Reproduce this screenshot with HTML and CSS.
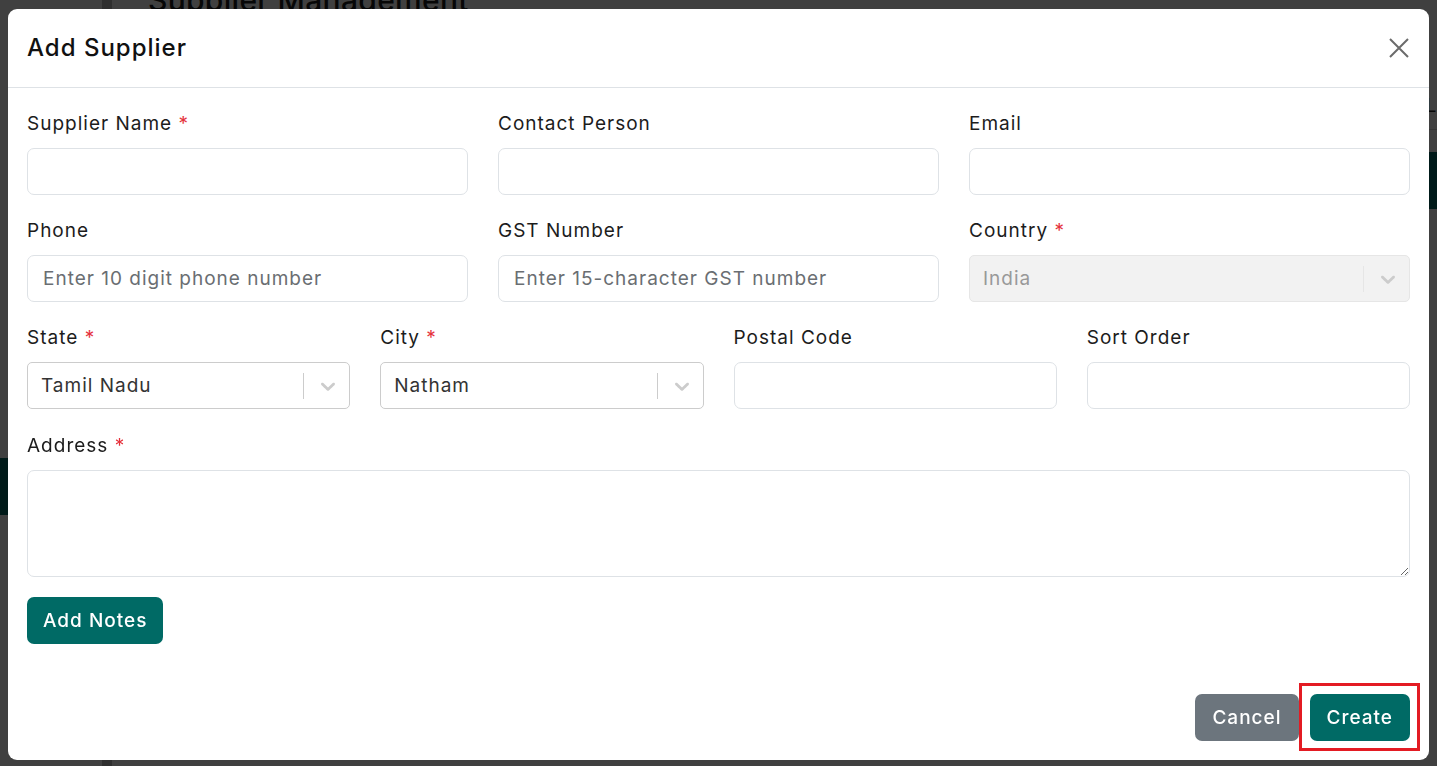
FILE: index.html
```html
<!DOCTYPE html>
<html lang="en">
<head>
    <meta charset="UTF-8">
    <meta name="viewport" content="width=device-width, initial-scale=1.0">
    <title>Supplier Management</title>
    <link rel="stylesheet" href="styles.css">
</head>
<body>
    <div class="app">
        <aside class="sidebar">
            <div class="side-item active"></div>
        </aside>
        <main class="main">
            <h1 class="page-title">Supplier Management</h1>
            <div class="toolbar"><span class="toolbar-link">List</span></div>
            <div class="table-head"></div>
        </main>
    </div>

    <div class="backdrop">
        <div class="modal">
            <div class="modal-header">
                <h2 class="modal-title">Add Supplier</h2>
                <button class="btn-close" type="button" aria-label="Close">
                    <svg width="22" height="22" viewBox="0 0 22 22">
                        <path d="M2 2L20 20M20 2L2 20" stroke="#6b6b6b" stroke-width="2" fill="none"/>
                    </svg>
                </button>
            </div>

            <form class="modal-body">
                <div class="form-row cols-3">
                    <div class="field">
                        <label>Supplier Name <span class="req">*</span></label>
                        <input type="text" class="input">
                    </div>
                    <div class="field">
                        <label>Contact Person</label>
                        <input type="text" class="input">
                    </div>
                    <div class="field">
                        <label>Email</label>
                        <input type="email" class="input">
                    </div>
                </div>

                <div class="form-row cols-3">
                    <div class="field">
                        <label>Phone</label>
                        <input type="text" class="input" placeholder="Enter 10 digit phone number">
                    </div>
                    <div class="field">
                        <label>GST Number</label>
                        <input type="text" class="input" placeholder="Enter 15-character GST number">
                    </div>
                    <div class="field">
                        <label>Country <span class="req">*</span></label>
                        <div class="select disabled">
                            <span class="select-value">India</span>
                            <span class="select-sep"></span>
                            <svg class="select-arrow" width="24" height="24" viewBox="0 0 20 20"><path d="M4.516 7.548c0.436-0.446 1.043-0.481 1.576 0l3.908 3.747 3.908-3.747c0.533-0.481 1.141-0.446 1.574 0 0.436 0.445 0.408 1.197 0 1.615-0.406 0.418-4.695 4.502-4.695 4.502-0.217 0.223-0.502 0.335-0.787 0.335s-0.57-0.112-0.789-0.335c0 0-4.287-4.084-4.695-4.502s-0.436-1.17 0-1.615z"/></svg>
                        </div>
                    </div>
                </div>

                <div class="form-row cols-4">
                    <div class="field">
                        <label>State <span class="req">*</span></label>
                        <div class="select">
                            <span class="select-value">Tamil Nadu</span>
                            <span class="select-sep"></span>
                            <svg class="select-arrow" width="24" height="24" viewBox="0 0 20 20"><path d="M4.516 7.548c0.436-0.446 1.043-0.481 1.576 0l3.908 3.747 3.908-3.747c0.533-0.481 1.141-0.446 1.574 0 0.436 0.445 0.408 1.197 0 1.615-0.406 0.418-4.695 4.502-4.695 4.502-0.217 0.223-0.502 0.335-0.787 0.335s-0.57-0.112-0.789-0.335c0 0-4.287-4.084-4.695-4.502s-0.436-1.17 0-1.615z"/></svg>
                        </div>
                    </div>
                    <div class="field">
                        <label>City <span class="req">*</span></label>
                        <div class="select">
                            <span class="select-value">Natham</span>
                            <span class="select-sep"></span>
                            <svg class="select-arrow" width="24" height="24" viewBox="0 0 20 20"><path d="M4.516 7.548c0.436-0.446 1.043-0.481 1.576 0l3.908 3.747 3.908-3.747c0.533-0.481 1.141-0.446 1.574 0 0.436 0.445 0.408 1.197 0 1.615-0.406 0.418-4.695 4.502-4.695 4.502-0.217 0.223-0.502 0.335-0.787 0.335s-0.57-0.112-0.789-0.335c0 0-4.287-4.084-4.695-4.502s-0.436-1.17 0-1.615z"/></svg>
                        </div>
                    </div>
                    <div class="field">
                        <label>Postal Code</label>
                        <input type="text" class="input">
                    </div>
                    <div class="field">
                        <label>Sort Order</label>
                        <input type="text" class="input">
                    </div>
                </div>

                <div class="form-row address-row">
                    <div class="field">
                        <label>Address <span class="req">*</span></label>
                        <textarea class="input textarea"></textarea>
                    </div>
                </div>

                <button type="button" class="btn btn-teal add-notes">Add Notes</button>
            </form>

            <div class="modal-footer">
                <button type="button" class="btn btn-grey">Cancel</button>
                <button type="button" class="btn btn-teal btn-create">Create</button>
            </div>
        </div>
    </div>
</body>
</html>
```

FILE: styles.css
```css
* {
    box-sizing: border-box;
}
html, body {
    margin: 0;
    height: 100%;
    overflow: hidden;
}
body {
    font-family: Inter, "Open Sans", sans-serif;
    letter-spacing: 1px;
    background-color: #ffffff;
    color: #1c1c1c;
}

/* page behind the dialog */
.app {
    display: flex;
    height: 100%;
}
.sidebar {
    width: 112px;
    border-right: 10px solid #bcbcbc;
    flex-shrink: 0;
}
.side-item.active {
    margin-top: 458px;
    height: 57px;
    background-color: #006a65;
}
.main {
    flex-grow: 1;
    min-width: 0;
    padding-left: 36px;
    overflow: hidden;
}
.page-title {
    margin: -19px 0 0;
    font-size: 30px;
    font-weight: 500;
    line-height: 38px;
    letter-spacing: 0.3px;
    color: #1c1c1c;
}
.toolbar {
    height: 111px;
    border-bottom: 1px solid #d8d8d8;
    display: flex;
    justify-content: flex-end;
    align-items: flex-end;
    padding-bottom: 12px;
}
.toolbar-link {
    font-size: 19px;
    margin-right: -24px;
}
.table-head {
    margin-top: 22px;
    height: 57px;
    background-color: #006a65;
}

/* dialog */
.backdrop {
    position: fixed;
    inset: 0;
    background-color: rgba(0, 0, 0, 0.75);
    padding: 9px 8px 0;
}
.modal {
    background-color: #ffffff;
    border-radius: 9px;
    display: flex;
    flex-direction: column;
}
.modal-header {
    height: 79px;
    padding: 0 19px;
    border-bottom: 1px solid #dee2e6;
    display: flex;
    align-items: center;
    justify-content: space-between;
}
.modal-title {
    margin: 0 0 2px;
    font-size: 24px;
    font-weight: 500;
    color: #111111;
}
.btn-close {
    border: none;
    background: none;
    padding: 0;
    display: flex;
    cursor: pointer;
}
.modal-body {
    padding: 19px 19px 19px;
    display: flex;
    flex-direction: column;
    gap: 19px;
    margin: 0;
}
.form-row {
    display: grid;
    gap: 30px;
}
.cols-3 {
    grid-template-columns: repeat(3, 1fr);
}
.cols-4 {
    grid-template-columns: repeat(4, 1fr);
}
.address-row {
    margin-top: 1px;
}
.field label {
    display: block;
    font-size: 19px;
    line-height: 28px;
    padding-top: 3px;
    margin-bottom: 10px;
    color: #1c1c1c;
}
.req {
    color: #e5323c;
}
.input {
    display: block;
    width: 100%;
    height: 47px;
    border: 1px solid #dee2e6;
    border-radius: 7px;
    padding: 0 15px;
    font-family: inherit;
    font-size: 19px;
    letter-spacing: 1px;
    color: #222222;
    background-color: #ffffff;
}
.input::placeholder {
    color: #6a6e72;
}
.textarea {
    height: 107px;
    resize: vertical;
}
.select {
    height: 47px;
    border: 1px solid #cccccc;
    border-radius: 5px;
    display: flex;
    align-items: center;
    padding: 0 9px 0 13px;
    background-color: #ffffff;
}
.select-value {
    flex-grow: 1;
    font-size: 19px;
    color: #333333;
}
.select-sep {
    width: 1px;
    height: 26px;
    background-color: #cccccc;
    margin-right: 12px;
}
.select-arrow {
    fill: #cccccc;
}
.select.disabled {
    background-color: #f2f2f2;
    border-color: #e6e6e6;
}
.select.disabled .select-value {
    color: #999999;
}
.select.disabled .select-sep {
    background-color: #e6e6e6;
}
.btn {
    height: 47px;
    border: none;
    border-radius: 7px;
    padding: 0 17px;
    font-family: inherit;
    font-size: 19px;
    font-weight: 500;
    letter-spacing: 1px;
    color: #ffffff;
    cursor: pointer;
}
.btn-teal {
    background-color: #006a65;
}
.btn-grey {
    background-color: #6c757d;
}
.add-notes {
    align-self: flex-start;
    padding: 0 16px;
    margin-top: 1px;
}
.modal-footer {
    display: flex;
    justify-content: flex-end;
    gap: 11px;
    padding: 31px 19px 19px;
}
.btn-create {
    position: relative;
}
/* highlight frame drawn round the Create button */
.btn-create::after {
    content: '';
    position: absolute;
    inset: -11px -10px -10px -11px;
    border: 3px solid #e31b23;
}
```
